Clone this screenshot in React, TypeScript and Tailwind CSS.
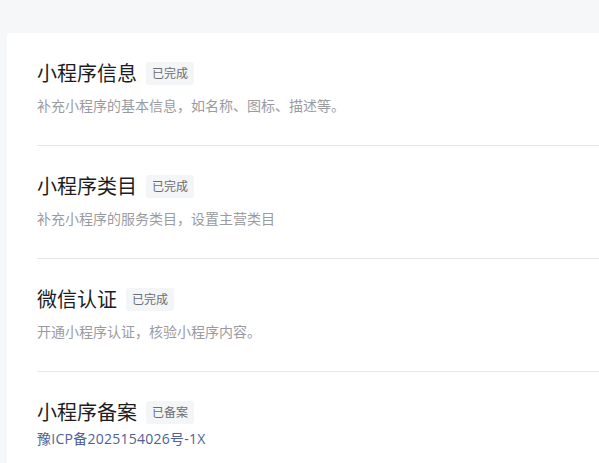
import React from "react";

const sections = [
  { title: "小程序信息", badge: "已完成", desc: "补充小程序的基本信息，如名称、图标、描述等。" },
  { title: "小程序类目", badge: "已完成", desc: "补充小程序的服务类目，设置主营类目" },
  { title: "微信认证", badge: "已完成", desc: "开通小程序认证，核验小程序内容。" },
];

export default function App() {
  return (
    <div
      className="w-[599px] h-[463px] overflow-hidden bg-[#f6f7f9] pt-[33px] pl-[7px]"
      style={{ fontFamily: '"Noto Sans CJK SC", "Noto Sans", sans-serif' }}
    >
      <div className="bg-white rounded-tl-[4px] h-full pl-[30px]">
        {sections.map((s) => (
          <div key={s.title} className="pt-[26px] pb-[29px] border-b border-[#e7e7e9]">
            <div className="flex items-center h-[28px]">
              <span className="text-[20px] leading-[28px] text-[#1d1d1f]">{s.title}</span>
              <span className="ml-[9px] h-[23px] px-[6px] flex items-center rounded-[3px] bg-[#f4f5f7] text-[12px] text-[#6b6d72]">
                {s.badge}
              </span>
            </div>
            <div className="mt-[7px] text-[14px] leading-[22px] text-[#9b9b9f]">{s.desc}</div>
          </div>
        ))}
        <div className="pt-[26px]">
          <div className="flex items-center h-[28px]">
            <span className="text-[20px] leading-[28px] text-[#1d1d1f]">小程序备案</span>
            <span className="ml-[9px] h-[23px] px-[6px] flex items-center rounded-[3px] bg-[#f4f5f7] text-[12px] text-[#6b6d72]">
              已备案
            </span>
          </div>
          <div
            className="mt-[2px] text-[14px] leading-[22px] tracking-[0.25px] text-[#4e6198]"
            style={{ fontFamily: '"Open Sans", "Noto Sans CJK SC", sans-serif' }}
          >
            豫ICP备2025154026号-1X
          </div>
        </div>
      </div>
    </div>
  );
}
